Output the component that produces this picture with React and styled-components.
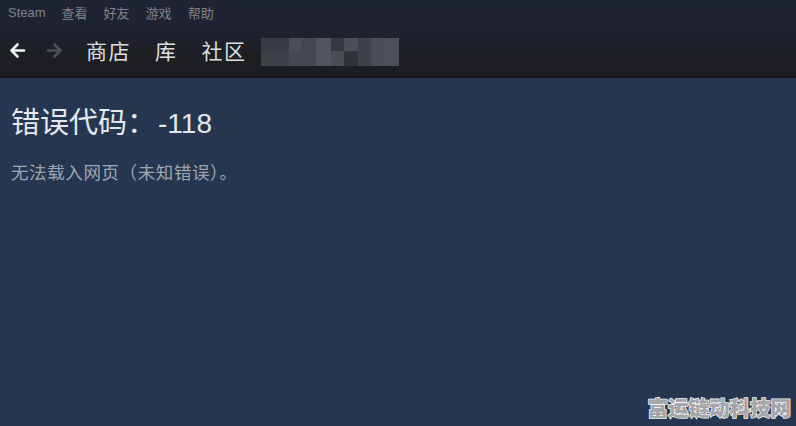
import React from "react";
import styled, { createGlobalStyle } from "styled-components";

const Global = createGlobalStyle`
  html, body { margin: 0; padding: 0; height: 100%; }
  body { background: #263650; overflow: hidden; }
  #root { height: 100%; }
`;

const FONT = `"Noto Sans", "Noto Sans CJK SC", sans-serif`;
const CJK = `"Noto Sans CJK SC", sans-serif`;

const Page = styled.div`
  position: relative;
  width: 796px;
  height: 426px;
  display: flex;
  flex-direction: column;
  font-family: ${FONT};
  background: #263650;
`;

const Header = styled.div`
  display: flex;
  flex-direction: column;
  background: linear-gradient(180deg, #1f2434 0%, #1f2330 40%, #1d1f23 75%, #1c1d20 100%);
  border-bottom: 2px solid #161719;
  height: 78px;
  box-sizing: border-box;
`;

const MenuBar = styled.div`
  display: flex;
  align-items: center;
  gap: 16px;
  height: 25px;
  padding-left: 8px;
`;

const MenuItem = styled.span`
  font-size: 13px;
  color: #7d828c;
  line-height: 1;
  font-family: ${(p) => (p.$latin ? `"Liberation Sans", sans-serif` : CJK)};
`;

const NavBar = styled.div`
  display: flex;
  align-items: center;
  height: 51px;
  padding-left: 9px;
`;

const ArrowBtn = styled.span`
  display: flex;
  width: 17px;
  height: 17px;
  margin-right: ${(p) => p.$mr}px;
`;

const NavLink = styled.span`
  font-size: 21px;
  color: #dcdedf;
  line-height: 1;
  margin-right: 24px;
  letter-spacing: 1.5px;
  font-family: ${CJK};
`;

const Mosaic = styled.div`
  display: grid;
  grid-template-rows: 13px 15px;
  height: 28px;
  margin-left: -10px;
  margin-top: 2px;
`;

const Cell = styled.div`
  background: ${(p) => p.$c};
`;

const Content = styled.div`
  display: flex;
  flex-direction: column;
  padding: 24px 11px;
`;

const Title = styled.h1`
  margin: 0;
  font-weight: 400;
  font-size: 29px;
  line-height: 36px;
  color: #e4e7eb;
  font-family: ${CJK};
`;

const Code = styled.span`
  font-family: "Liberation Sans", sans-serif;
  font-size: 28px;
  margin-left: 2px;
`;

const Message = styled.p`
  margin: 19px 0 0 0;
  font-size: 17.5px;
  line-height: 22px;
  letter-spacing: 0.6px;
  color: #9ea6b2;
  font-family: ${CJK};
`;

const Watermark = styled.div`
  position: absolute;
  right: 5px;
  bottom: 9px;
  font-size: 20.5px;
  font-weight: 900;
  color: #a3a5aa;
  line-height: 1;
  -webkit-text-stroke: 1.6px #f2f2f2;
  paint-order: stroke fill;
  font-family: ${CJK};
`;

const cols = [28, 12, 15, 15, 13, 14, 13, 15, 13];
const top = ["#383b42", "#4a4e55", "#45494f", "#52565c", "#343a40", "#4b4f56", "#3e4248", "#4a4e55", "#4c5057"];
const bottom = ["#3d4148", "#44484f", "#45494f", "#52565c", "#4a4e54", "#2f3338", "#3e4248", "#4a4e55", "#4c5057"];

function Arrow({ dir, color }) {
  const d = dir === "left" ? "M15 8.5H2.5M8.5 2.5L2.5 8.5L8.5 14.5" : "M2 8.5H14.5M8.5 2.5L14.5 8.5L8.5 14.5";
  return (
    <svg width="17" height="17" viewBox="0 0 17 17" fill="none">
      <path d={d} stroke={color} strokeWidth="2.6" strokeLinecap="round" strokeLinejoin="round" />
    </svg>
  );
}

export default function App() {
  return (
    <Page>
      <Global />
      <Header>
        <MenuBar>
          <MenuItem $latin>Steam</MenuItem>
          <MenuItem>查看</MenuItem>
          <MenuItem>好友</MenuItem>
          <MenuItem>游戏</MenuItem>
          <MenuItem>帮助</MenuItem>
        </MenuBar>
        <NavBar>
          <ArrowBtn $mr={20}>
            <Arrow dir="left" color="#f2f3f4" />
          </ArrowBtn>
          <ArrowBtn $mr={23}>
            <Arrow dir="right" color="#4a5056" />
          </ArrowBtn>
          <NavLink>商店</NavLink>
          <NavLink>库</NavLink>
          <NavLink>社区</NavLink>
          <Mosaic style={{ gridTemplateColumns: cols.map((c) => c + "px").join(" ") }}>
            {top.map((c, i) => (
              <Cell key={"t" + i} $c={c} />
            ))}
            {bottom.map((c, i) => (
              <Cell key={"b" + i} $c={c} />
            ))}
          </Mosaic>
        </NavBar>
      </Header>
      <Content>
        <Title>
          错误代码：<Code>-118</Code>
        </Title>
        <Message>无法载入网页（未知错误）。</Message>
      </Content>
      <Watermark>富运链动科技网</Watermark>
    </Page>
  );
}
